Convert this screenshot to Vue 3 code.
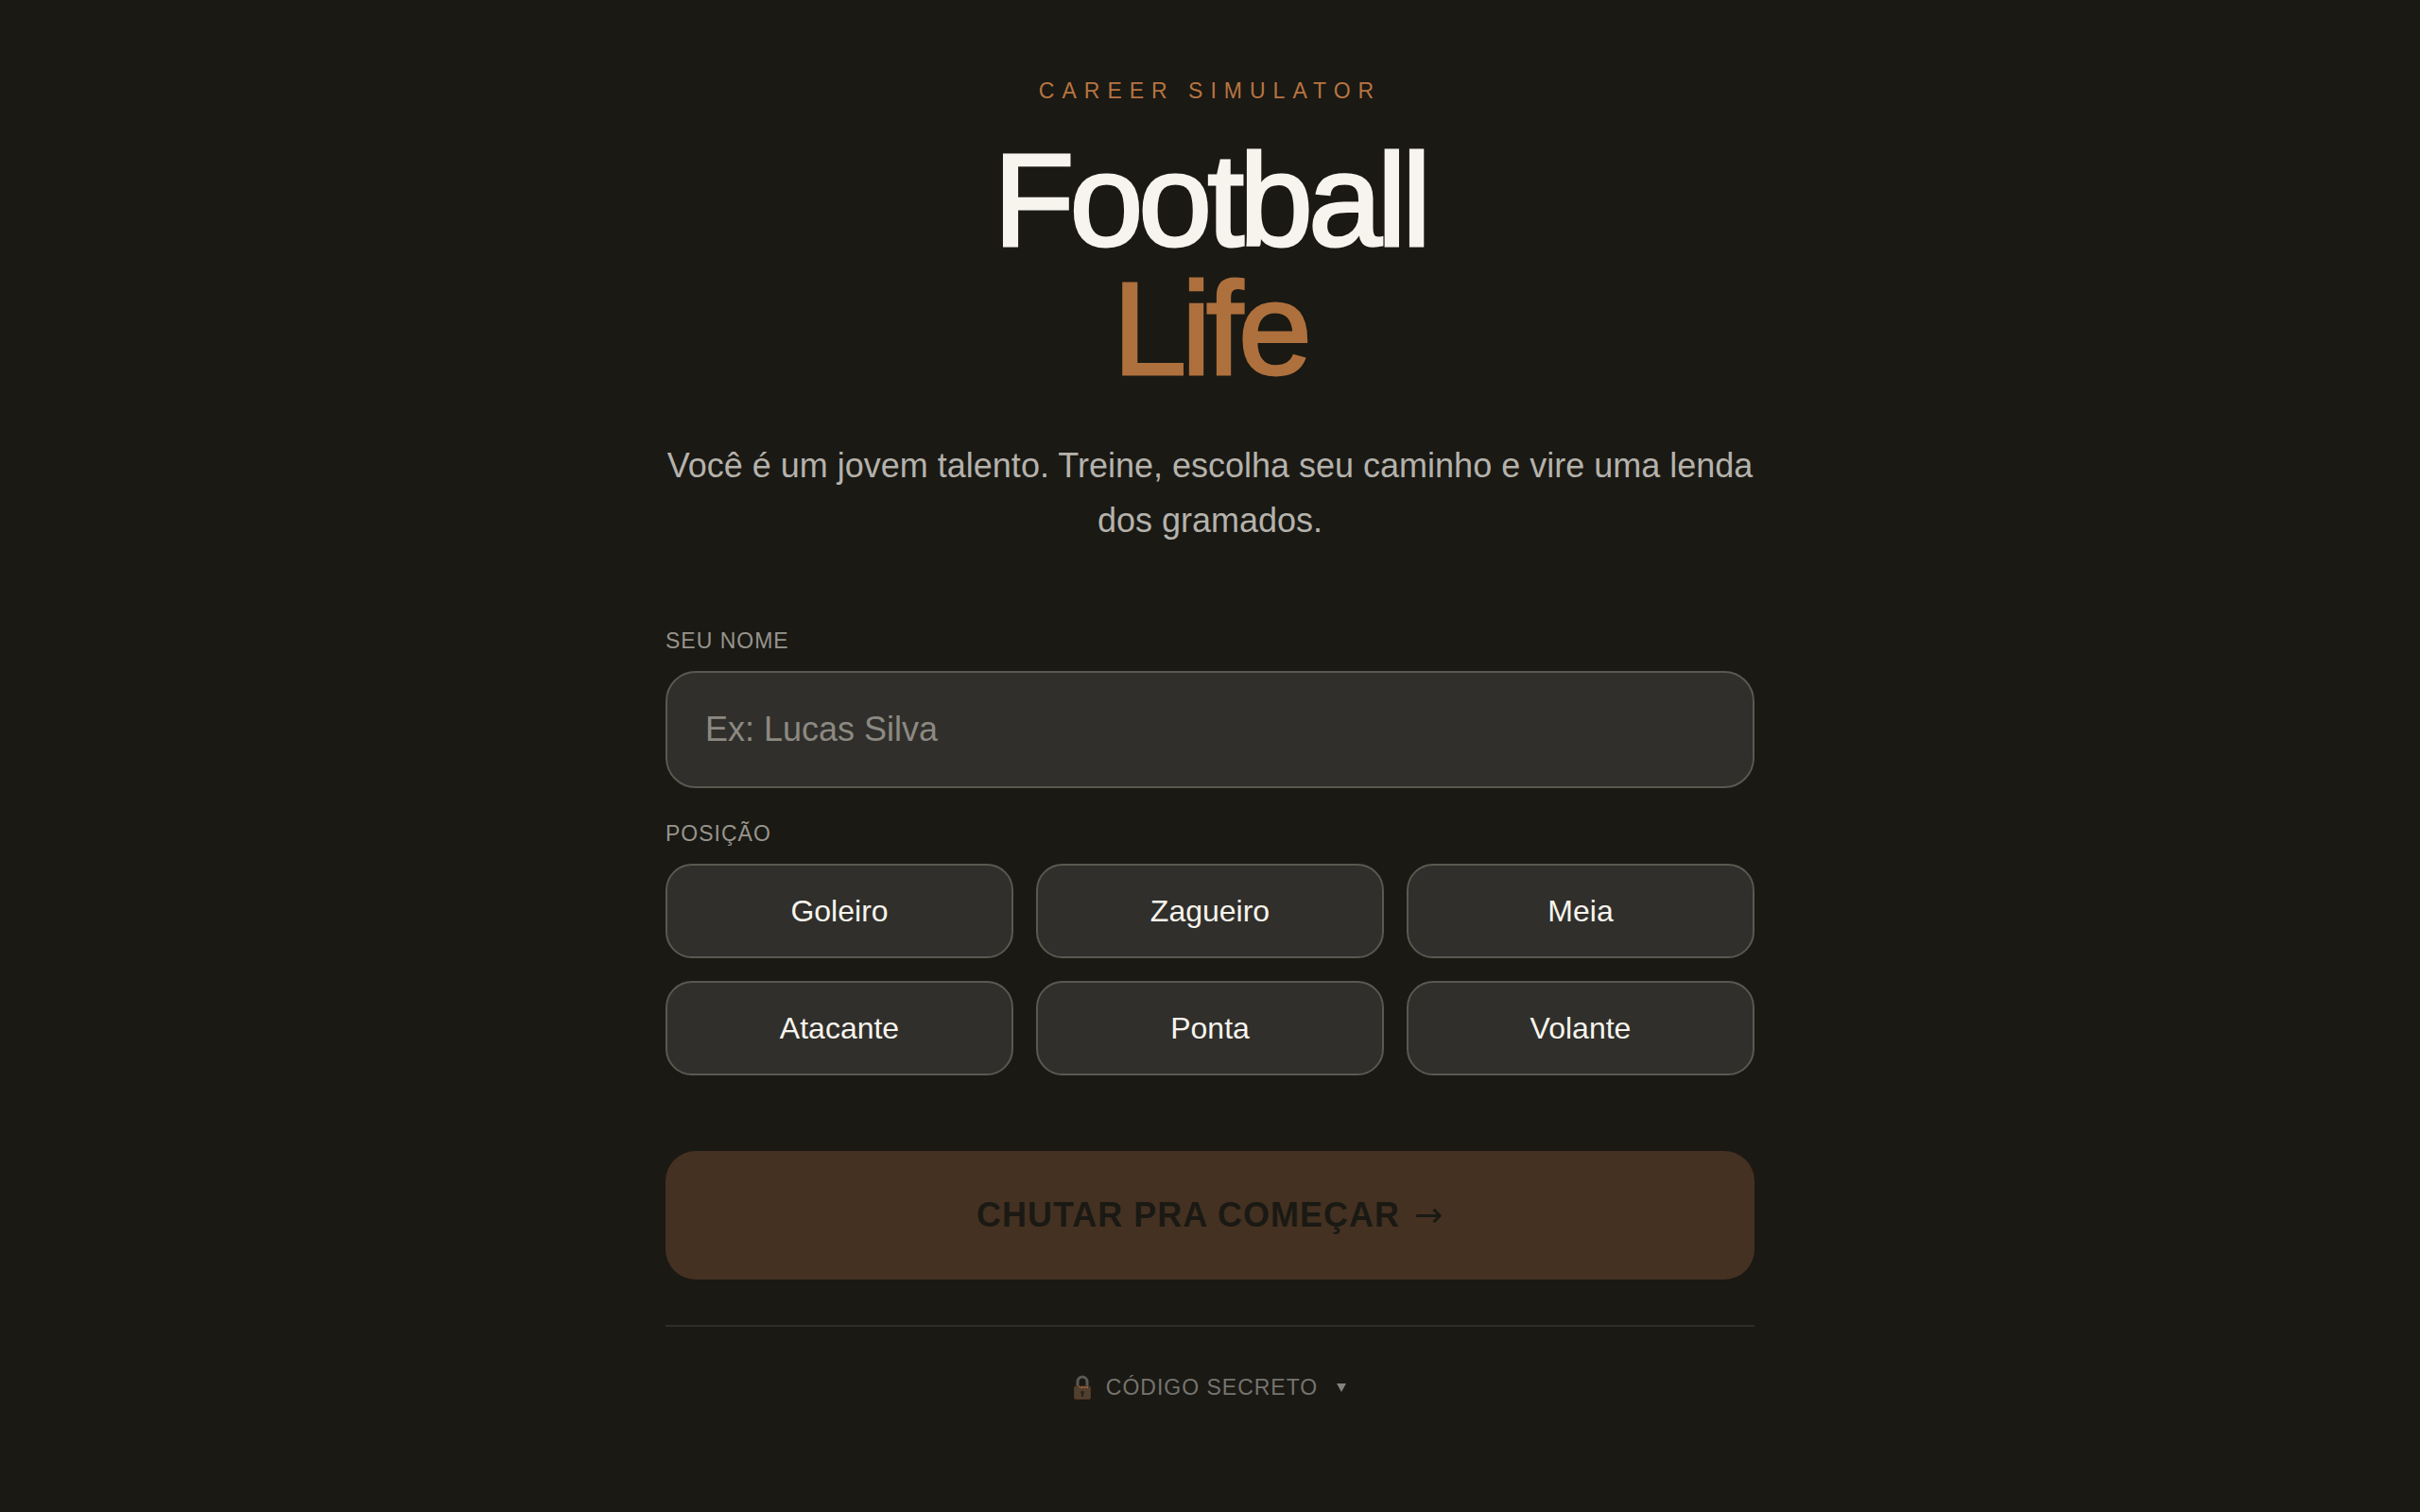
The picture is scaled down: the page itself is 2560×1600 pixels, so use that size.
<script setup>
import { ref, computed } from 'vue'

const name = ref('')
const position = ref('')
const secretOpen = ref(false)
const positions = ['Goleiro', 'Zagueiro', 'Meia', 'Atacante', 'Ponta', 'Volante']
const ready = computed(() => name.value.trim() !== '' && position.value !== '')
</script>

<template>
  <main class="screen">
    <form class="start" @submit.prevent>
      <header class="intro">
        <p class="eyebrow">Career Simulator</p>
        <h1 class="title">Football<br><span class="accent">Life</span></h1>
        <p class="lead">Você é um jovem talento. Treine, escolha seu caminho e vire uma lenda dos gramados.</p>
      </header>

      <label class="label" for="player-name">Seu nome</label>
      <input id="player-name" v-model="name" class="field" type="text" placeholder="Ex: Lucas Silva">

      <fieldset class="group">
        <legend class="label">Posição</legend>
        <div class="positions">
          <button
            v-for="item in positions"
            :key="item"
            type="button"
            class="position"
            :class="{ chosen: item === position }"
            :aria-pressed="item === position"
            @click="position = item"
          >{{ item }}</button>
        </div>
      </fieldset>

      <button class="submit" type="submit" :disabled="!ready">Chutar pra começar <span class="arrow">→</span></button>

      <footer class="secret">
        <button type="button" class="toggle" :aria-expanded="secretOpen" @click="secretOpen = !secretOpen">
          <svg class="lock" viewBox="0 0 18 26" aria-hidden="true">
            <path d="M4 13V7a5 5 0 0 1 10 0v6" fill="none" stroke="#5c5a57" stroke-width="3" />
            <rect x="0.500" y="12" width="17" height="13.500" rx="1.500" fill="#51402f" stroke="#503720" />
            <path d="M5 12.500h10M7 13.500h8" stroke="#9a6538" stroke-width="1" stroke-dasharray="2 1" />
            <path d="M9 16.500a2 2 0 0 1 1.200 3.500v3H7.800v-3A2 2 0 0 1 9 16.500z" fill="#2d251c" />
          </svg>
          <span>Código secreto</span>
          <svg class="caret" viewBox="0 0 10 9" aria-hidden="true"><path d="M0 0h10L5 9z" fill="#85837f" /></svg>
        </button>
      </footer>
    </form>
  </main>
</template>

<style>
body {
  margin: 0;
  background: #1a1914;
}
</style>

<style scoped>
.screen {
  box-sizing: border-box;
  min-height: 100vh;
  padding: 80px 48px;
  background: #1a1914;
  color: #f7f4ed;
  font-family: "Liberation Sans", Arial, sans-serif;
}
.start {
  display: flex;
  flex-direction: column;
  max-width: 1152px;
  margin: 0 auto;
}
.intro {
  margin-bottom: 82px;
  text-align: center;
}
.eyebrow {
  margin: 0 0 32px;
  color: #b87440;
  font-size: 23px;
  line-height: 32px;
  letter-spacing: 8px;
  text-transform: uppercase;
}
.title {
  margin: 0 0 48px;
  font-size: 140px;
  font-weight: 400;
  line-height: 136px;
  letter-spacing: -5px;
  -webkit-text-stroke: 3px currentColor;
}
.accent {
  color: #ae703d;
}
.lead {
  margin: 0;
  color: #b5b2ac;
  font-size: 36px;
  line-height: 58px;
}
.label {
  padding: 0;
  margin-bottom: 16px;
  color: #97948d;
  font-size: 23px;
  line-height: 32px;
  letter-spacing: 1px;
  text-transform: uppercase;
}
.field {
  box-sizing: border-box;
  width: 100%;
  height: 124px;
  margin-bottom: 32px;
  padding: 0 40px;
  border: 2px solid #5a5850;
  border-radius: 32px;
  background: #302f2b;
  color: inherit;
  font: inherit;
  font-size: 36px;
}
.field::placeholder {
  color: #8c8982;
  opacity: 1;
}
.group {
  min-width: 0;
  margin: 0 0 80px;
  padding: 0;
  border: 0;
}
.positions {
  display: grid;
  grid-template-columns: repeat(3, 1fr);
  gap: 24px;
}
.position {
  height: 100px;
  padding: 0;
  border: 2px solid #5a5850;
  border-radius: 28px;
  background: #302f2b;
  color: #f7f4ed;
  font: inherit;
  font-size: 32px;
  cursor: pointer;
}
.position.chosen {
  border-color: #b87440;
}
.submit {
  height: 136px;
  margin-bottom: 48px;
  border: 0;
  border-radius: 32px;
  background: #b87440;
  color: #1a1914;
  font: inherit;
  font-size: 36px;
  font-weight: 700;
  letter-spacing: 1px;
  text-transform: uppercase;
}
.submit:disabled {
  background: #453121;
}
.arrow {
  margin-left: 4px;
  font-family: "DejaVu Sans", sans-serif;
  font-weight: 400;
}
.secret {
  display: flex;
  justify-content: center;
  padding-top: 48px;
  border-top: 2px solid #2f2e2a;
}
.toggle {
  display: flex;
  align-items: center;
  padding: 0;
  border: 0;
  background: none;
  color: #76746f;
  font: inherit;
  font-size: 23px;
  line-height: 32px;
  letter-spacing: 1px;
  text-transform: uppercase;
  cursor: pointer;
}
.lock {
  width: 18px;
  height: 26px;
  margin-right: 16px;
}
.caret {
  width: 10px;
  height: 9px;
  margin-left: 20px;
}
</style>
